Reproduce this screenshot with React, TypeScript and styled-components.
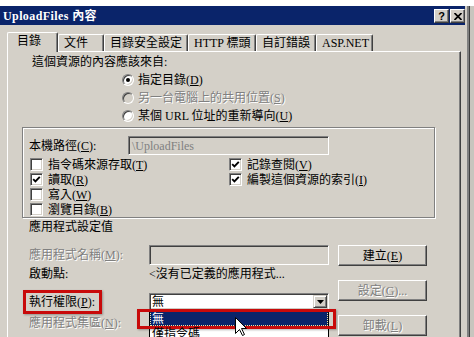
import React from "react";
import styled, { createGlobalStyle, css } from "styled-components";

const GlobalStyle = createGlobalStyle`
  html, body { margin: 0; padding: 0; background: #fff; }
  body {
    font-family: "Liberation Serif", "Noto Sans CJK TC", serif;
    font-size: 12px;
    line-height: 14px;
    color: #000;
    overflow: hidden;
  }
  u { text-decoration: underline; text-underline-offset: 1px; }
`;

const FACE = "#D4D0C8";
const SHADOW = "#808080";
const DARK = "#404040";
const NAVY = "#0A246A";
const RED = "#C80A0A";

const disabledText = css`
  color: ${SHADOW};
  text-shadow: 1px 1px 0 #fff;
`;

const Page = styled.div`
  position: relative;
  width: 474px;
  height: 337px;
  overflow: hidden;
  box-sizing: border-box;
  padding-top: 6px;
  background: #fff;
`;

const Window = styled.div`
  width: 465px;
  height: 331px;
  padding-right: 2px;
  border-right: 2px solid ${SHADOW};
  box-shadow: 1px 0 0 ${DARK}, 5px 0 0 #c8c5be;
  background: ${FACE};
  display: flex;
  flex-direction: column;
`;

const TitleBar = styled.div`
  height: 19px;
  flex: none;
  background: ${NAVY};
  display: flex;
  align-items: center;
  padding: 0 0 0 3px;
`;

const TitleText = styled.div`
  flex: 1;
  color: #fff;
  font-weight: bold;
  letter-spacing: 0.4px;
  white-space: nowrap;
`;

const CaptionButtons = styled.div`
  display: flex;
  gap: 1px;
  margin-top: 1px;
`;

const CaptionButton = styled.div`
  width: 15px;
  height: 14px;
  box-sizing: border-box;
  background: ${FACE};
  border: 1px solid;
  border-color: #fff ${DARK} ${DARK} #fff;
  box-shadow: inset -1px -1px 0 ${SHADOW};
  display: flex;
  align-items: center;
  justify-content: center;
  font: bold 11px/11px "Liberation Sans", sans-serif;
  color: #000;
`;

const Body = styled.div`
  padding-top: 7px;
  display: flex;
  flex-direction: column;
`;

const TabRow = styled.div`
  display: flex;
  align-items: flex-end;
  height: 19px;
  margin-left: 7px;
  position: relative;
  z-index: 1;
`;

const Tab = styled.div<{ $w: number; $active?: boolean }>`
  width: ${(p) => p.$w}px;
  height: ${(p) => (p.$active ? 20 : 17)}px;
  margin-bottom: ${(p) => (p.$active ? -1 : 0)}px;
  box-sizing: border-box;
  padding: 1px 0 0 ${(p) => (p.$active ? 9 : 5)}px;
  border-top: 1px solid #fff;
  border-left: 1px solid #fff;
  border-right: 1px solid ${DARK};
  box-shadow: inset -1px 0 0 ${SHADOW};
  border-radius: 2px 2px 0 0;
  background: ${FACE};
  white-space: nowrap;
`;

const Panel = styled.div`
  margin-left: 7px;
  width: 454px;
  height: 290px;
  box-sizing: border-box;
  border-top: 1px solid #fff;
  border-left: 1px solid #fff;
  border-right: 1px solid ${DARK};
  box-shadow: inset -1px 0 0 ${SHADOW};
  padding-top: 3px;
  display: flex;
  flex-direction: column;
  align-items: flex-start;
`;

const Intro = styled.div`
  margin-left: 24px;
  height: 14px;
  white-space: nowrap;
`;

const RadioList = styled.div`
  margin: 2px 0 0 114px;
  display: flex;
  flex-direction: column;
`;

const RadioRow = styled.div<{ $disabled?: boolean }>`
  height: 18px;
  display: flex;
  align-items: center;
  gap: 4px;
  white-space: nowrap;
  ${(p) => p.$disabled && disabledText}
`;

const Radio = styled.span<{ $checked?: boolean; $disabled?: boolean }>`
  position: relative;
  flex: none;
  width: 12px;
  height: 12px;
  box-sizing: border-box;
  border-radius: 50%;
  border: 1px solid;
  border-color: ${SHADOW} #fff #fff ${SHADOW};
  box-shadow: inset 1px 1px 0 ${DARK}, inset -1px -1px 0 ${FACE};
  background: ${(p) => (p.$disabled ? FACE : "#fff")};
  ${(p) =>
    p.$checked &&
    css`
      &::after {
        content: "";
        position: absolute;
        left: 3px;
        top: 3px;
        width: 4px;
        height: 4px;
        border-radius: 50%;
        background: #000;
      }
    `}
`;

const GroupBox = styled.div`
  margin: 2px 0 0 14px;
  width: 413px;
  height: 91px;
  box-sizing: border-box;
  border: 1px solid ${SHADOW};
  box-shadow: inset 1px 1px 0 #fff, 1px 1px 0 #fff;
  display: flex;
  flex-direction: column;
`;

const PathRow = styled.div`
  margin: 8px 0 0 6px;
  height: 19px;
  display: flex;
  align-items: center;
`;

const PathLabel = styled.div`
  width: 99px;
  white-space: nowrap;
`;

const TextField = styled.div<{ $width: number; $height?: number; $disabled?: boolean }>`
  width: ${(p) => p.$width}px;
  height: ${(p) => p.$height ?? 20}px;
  box-sizing: border-box;
  border: 1px solid;
  border-color: ${SHADOW} #fff #fff ${SHADOW};
  box-shadow: inset 1px 1px 0 ${DARK}, inset -1px -1px 0 ${FACE};
  background: ${(p) => (p.$disabled ? FACE : "#fff")};
  color: ${(p) => (p.$disabled ? SHADOW : "#000")};
  padding-left: 3px;
  display: flex;
  align-items: center;
  white-space: nowrap;
  overflow: hidden;
`;

const CheckGrid = styled.div`
  margin: 2px 0 0 7px;
  display: grid;
  grid-auto-flow: column;
  grid-template-rows: repeat(4, 15px);
  grid-template-columns: 199px 1fr;
`;

const CheckItem = styled.div`
  display: flex;
  align-items: center;
  gap: 5px;
  white-space: nowrap;
`;

const CheckBox = styled.span`
  flex: none;
  width: 13px;
  height: 13px;
  box-sizing: border-box;
  border: 1px solid;
  border-color: ${SHADOW} #fff #fff ${SHADOW};
  box-shadow: inset 1px 1px 0 ${DARK}, inset -1px -1px 0 ${FACE};
  background: #fff;
  display: flex;
  align-items: center;
  justify-content: center;
`;

const SectionTitle = styled.div`
  margin: 2px 0 0 21px;
  height: 14px;
  white-space: nowrap;
`;

const AppSettings = styled.div`
  margin: 11px 0 0 21px;
  display: flex;
  gap: 9px;
`;

const FormColumn = styled.div`
  width: 300px;
  display: flex;
  flex-direction: column;
`;

const FormRow = styled.div<{ $h: number; $top?: number }>`
  height: ${(p) => p.$h}px;
  margin-top: ${(p) => p.$top ?? 0}px;
  display: flex;
  align-items: center;
  white-space: nowrap;
`;

const FieldLabel = styled.div<{ $disabled?: boolean; $marked?: boolean }>`
  width: 120px;
  flex: none;
  position: relative;
  white-space: nowrap;
  ${(p) => p.$disabled && disabledText}
  ${(p) =>
    p.$marked &&
    css`
      &::after {
        content: "";
        position: absolute;
        left: -6px;
        top: calc(50% - 12px);
        width: 79px;
        height: 24px;
        box-sizing: border-box;
        border: 3px solid ${RED};
        box-shadow: 1px 1px 2px rgba(0, 0, 0, 0.3);
      }
    `}
`;

const Select = styled.div`
  position: relative;
  width: 180px;
  height: 17px;
  box-sizing: border-box;
  border: 1px solid;
  border-color: ${SHADOW} #fff #fff ${SHADOW};
  box-shadow: inset 1px 1px 0 ${DARK}, inset -1px -1px 0 ${FACE};
  background: #fff;
  padding-left: 2px;
  display: flex;
  align-items: center;
`;

const SelectValue = styled.span`
  flex: 1;
`;

const ArrowButton = styled.span`
  width: 14px;
  height: 13px;
  margin-right: 1px;
  box-sizing: border-box;
  background: ${FACE};
  border: 1px solid;
  border-color: ${FACE} ${DARK} ${DARK} ${FACE};
  box-shadow: inset 1px 1px 0 #fff, inset -1px -1px 0 ${SHADOW};
  display: flex;
  align-items: center;
  justify-content: center;
`;

const DropList = styled.div`
  position: absolute;
  left: -1px;
  top: calc(100% + 1px);
  width: 180px;
  box-sizing: border-box;
  border: 1px solid #000;
  background: #fff;
  z-index: 10;
`;

const ListItem = styled.div<{ $selected?: boolean }>`
  position: relative;
  height: 15px;
  padding-left: 2px;
  display: flex;
  align-items: center;
  ${(p) =>
    p.$selected &&
    css`
      background: ${NAVY};
      color: #fff;
      outline: 1px dotted #f3e6a0;
      outline-offset: -1px;
      &::after {
        content: "";
        position: absolute;
        left: -13px;
        top: -2px;
        width: 199px;
        height: 20px;
        box-sizing: border-box;
        border: 3px solid ${RED};
        box-shadow: 1px 1px 2px rgba(0, 0, 0, 0.3);
      }
    `}
`;

const ButtonColumn = styled.div`
  display: flex;
  flex-direction: column;
  gap: 14px;
`;

const PushButton = styled.div<{ $disabled?: boolean }>`
  width: 89px;
  height: 21px;
  box-sizing: border-box;
  border: 1px solid;
  border-color: #fff ${DARK} ${DARK} #fff;
  box-shadow: inset -1px -1px 0 ${SHADOW};
  display: flex;
  align-items: center;
  justify-content: center;
  white-space: nowrap;
  ${(p) => p.$disabled && disabledText}
`;

const Cursor = styled.svg`
  position: absolute;
  left: 235px;
  top: 317px;
  z-index: 20;
`;

const tabs = [
  { label: "目錄", w: 51, active: true },
  { label: "文件", w: 46 },
  { label: "目錄安全設定", w: 84 },
  { label: "HTTP 標頭", w: 68 },
  { label: "自訂錯誤", w: 60 },
  { label: "ASP.NET", w: 57 },
];

const Check = () => (
  <svg width="9" height="9" viewBox="0 0 9 9">
    <path d="M1.2 4.2 L3.4 6.4 L7.8 1.8" stroke="#000" strokeWidth="1.9" fill="none" />
  </svg>
);

export default function App() {
  return (
    <>
      <GlobalStyle />
      <Page>
        <Window>
          <TitleBar>
            <TitleText>UploadFiles 內容</TitleText>
            <CaptionButtons>
              <CaptionButton>?</CaptionButton>
              <CaptionButton>
                <svg width="8" height="7" viewBox="0 0 8 7">
                  <path d="M0.5 0 L7.5 7 M7.5 0 L0.5 7" stroke="#000" strokeWidth="1.7" />
                </svg>
              </CaptionButton>
            </CaptionButtons>
          </TitleBar>
          <Body>
            <TabRow>
              {tabs.map((t) => (
                <Tab key={t.label} $w={t.w} $active={t.active}>
                  {t.label}
                </Tab>
              ))}
            </TabRow>
            <Panel>
              <Intro>這個資源的內容應該來自:</Intro>
              <RadioList>
                <RadioRow>
                  <Radio $checked />
                  <span>
                    指定目錄(<u>D</u>)
                  </span>
                </RadioRow>
                <RadioRow $disabled>
                  <Radio $disabled />
                  <span>
                    另一台電腦上的共用位置(<u>S</u>)
                  </span>
                </RadioRow>
                <RadioRow>
                  <Radio />
                  <span>
                    某個 URL 位址的重新導向(<u>U</u>)
                  </span>
                </RadioRow>
              </RadioList>
              <GroupBox>
                <PathRow>
                  <PathLabel>
                    本機路徑(<u>C</u>):
                  </PathLabel>
                  <TextField $width={201} $height={19} $disabled>
                    {"\\UploadFiles"}
                  </TextField>
                </PathRow>
                <CheckGrid>
                  <CheckItem>
                    <CheckBox />
                    <span>
                      指令碼來源存取(<u>T</u>)
                    </span>
                  </CheckItem>
                  <CheckItem>
                    <CheckBox>
                      <Check />
                    </CheckBox>
                    <span>
                      讀取(<u>R</u>)
                    </span>
                  </CheckItem>
                  <CheckItem>
                    <CheckBox />
                    <span>
                      寫入(<u>W</u>)
                    </span>
                  </CheckItem>
                  <CheckItem>
                    <CheckBox />
                    <span>
                      瀏覽目錄(<u>B</u>)
                    </span>
                  </CheckItem>
                  <CheckItem>
                    <CheckBox>
                      <Check />
                    </CheckBox>
                    <span>
                      記錄查閱(<u>V</u>)
                    </span>
                  </CheckItem>
                  <CheckItem>
                    <CheckBox>
                      <Check />
                    </CheckBox>
                    <span>
                      編製這個資源的索引(<u>I</u>)
                    </span>
                  </CheckItem>
                </CheckGrid>
              </GroupBox>
              <SectionTitle>應用程式設定值</SectionTitle>
              <AppSettings>
                <FormColumn>
                  <FormRow $h={20}>
                    <FieldLabel $disabled>
                      應用程式名稱(<u>M</u>):
                    </FieldLabel>
                    <TextField $width={180} $disabled />
                  </FormRow>
                  <FormRow $h={14} $top={2}>
                    <FieldLabel>啟動點:</FieldLabel>
                    <span>{"<沒有已定義的應用程式..."}</span>
                  </FormRow>
                  <FormRow $h={17} $top={12}>
                    <FieldLabel $marked>
                      執行權限(<u>P</u>):
                    </FieldLabel>
                    <Select>
                      <SelectValue>無</SelectValue>
                      <ArrowButton>
                        <svg width="7" height="4" viewBox="0 0 7 4">
                          <path d="M0 0 H7 L3.5 4 Z" fill="#000" />
                        </svg>
                      </ArrowButton>
                      <DropList>
                        <ListItem $selected>無</ListItem>
                        <ListItem>僅指令碼</ListItem>
                      </DropList>
                    </Select>
                  </FormRow>
                  <FormRow $h={14} $top={6}>
                    <FieldLabel $disabled>
                      應用程式集區(<u>N</u>):
                    </FieldLabel>
                  </FormRow>
                </FormColumn>
                <ButtonColumn>
                  <PushButton>
                    建立(<u>E</u>)
                  </PushButton>
                  <PushButton $disabled>
                    設定(<u>G</u>)...
                  </PushButton>
                  <PushButton $disabled>
                    卸載(<u>L</u>)
                  </PushButton>
                </ButtonColumn>
              </AppSettings>
            </Panel>
          </Body>
        </Window>
        <Cursor width="12" height="20" viewBox="0 0 12 20">
          <path
            d="M0.5 0.5 L0.5 16.5 L4.5 12.5 L7.5 18.5 L9.5 17.5 L6.5 11.5 L11.5 11.5 Z"
            fill="#fff"
            stroke="#000"
            strokeWidth="1"
          />
        </Cursor>
      </Page>
    </>
  );
}
